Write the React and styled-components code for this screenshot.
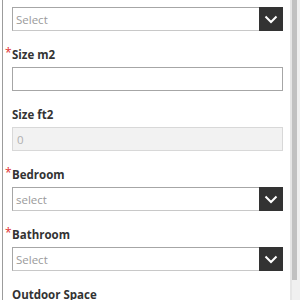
import styled, { createGlobalStyle } from "styled-components";

const GlobalStyle = createGlobalStyle`
  html, body {
    margin: 0;
    padding: 0;
    background: #fff;
    overflow: hidden;
  }
  body {
    font-family: "Open Sans", "Liberation Sans", sans-serif;
  }
`;

const Frame = styled.div`
  height: 300px;
  display: flex;
  padding-left: 2px;
  box-sizing: border-box;
`;

const Panel = styled.div`
  flex: 1;
  min-width: 0;
  border-left: 1px solid #9c9c9c;
  overflow: hidden;
  padding: 7px 7px 0 9px;
`;

const ScrollTrack = styled.div`
  width: 10px;
  background: #f0f0f0;
  border-left: 2px solid #e6e6e6;
  box-sizing: border-box;
`;

const ScrollThumb = styled.div`
  width: 5px;
  height: 280px;
  background: #c1c1c1;
`;

const Field = styled.div`
  margin-top: 17px;
`;

const Label = styled.label`
  display: block;
  font-size: 11.5px;
  font-weight: 700;
  line-height: 14px;
  color: #333;
  margin-bottom: 5px;
`;

const Required = styled.span`
  display: inline-block;
  width: 7px;
  margin-left: -7px;
  color: #e02b2b;
  font-weight: 400;
  font-size: 12px;
  line-height: 10px;
  vertical-align: top;
`;

const SelectBox = styled.div`
  display: flex;
  align-items: center;
  height: 24px;
  box-sizing: border-box;
  border: 1px solid #a6a6a6;
  border-bottom-color: #c8c8c8;
  background: #fff;
`;

const SelectText = styled.span`
  flex: 1;
  padding-left: 3px;
  font-size: 11.5px;
  color: #9a9a9a;
`;

const ArrowButton = styled.span`
  display: flex;
  align-items: center;
  justify-content: center;
  width: 24px;
  height: 24px;
  margin: -1px -1px -1px 0;
  background: #333;
`;

const TextInput = styled.div`
  height: 24px;
  box-sizing: border-box;
  border: 1px solid ${(p) => (p.disabled ? "#d8d8d8" : "#a6a6a6")};
  background: ${(p) => (p.disabled ? "#f2f2f2" : "#fff")};
  display: flex;
  align-items: center;
  padding-left: 4px;
  font-size: 11.5px;
  color: #b0b0b0;
`;

const Chevron = () => (
  <svg width="14" height="9" viewBox="0 0 14 9">
    <path d="M1.5 1.5 L7 7 L12.5 1.5" fill="none" stroke="#fff" strokeWidth="2" />
  </svg>
);

const Select = ({ placeholder }) => (
  <SelectBox>
    <SelectText>{placeholder}</SelectText>
    <ArrowButton>
      <Chevron />
    </ArrowButton>
  </SelectBox>
);

const FieldLabel = ({ required, children }) => (
  <Label>
    {required && <Required>*</Required>}
    {children}
  </Label>
);

export default function App() {
  return (
    <>
      <GlobalStyle />
      <Frame>
        <Panel>
          <Select placeholder="Select" />
          <Field>
            <FieldLabel required>Size m2</FieldLabel>
            <TextInput />
          </Field>
          <Field>
            <FieldLabel>Size ft2</FieldLabel>
            <TextInput disabled>0</TextInput>
          </Field>
          <Field>
            <FieldLabel required>Bedroom</FieldLabel>
            <Select placeholder="select" />
          </Field>
          <Field>
            <FieldLabel required>Bathroom</FieldLabel>
            <Select placeholder="Select" />
          </Field>
          <Field>
            <FieldLabel>Outdoor Space</FieldLabel>
          </Field>
        </Panel>
        <ScrollTrack>
          <ScrollThumb />
        </ScrollTrack>
      </Frame>
    </>
  );
}
